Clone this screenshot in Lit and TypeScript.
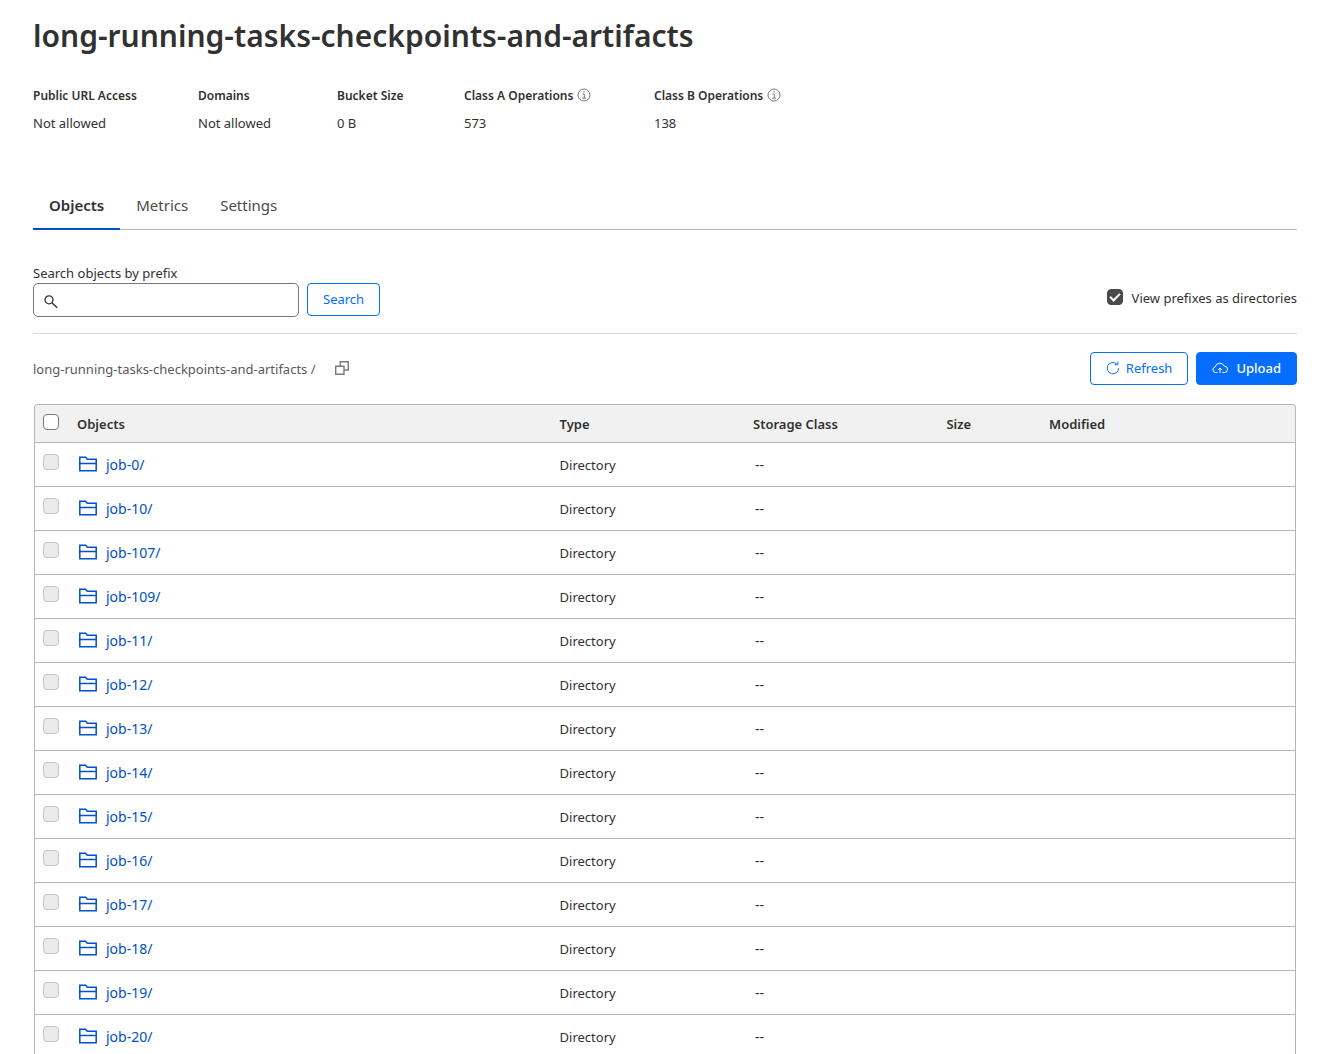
import { LitElement, html, css, svg } from "lit";
import { customElement, state } from "lit/decorators.js";

interface Stat {
  label: string;
  value: string;
  info?: boolean;
}

const BUCKET = "long-running-tasks-checkpoints-and-artifacts";

const STATS: Stat[] = [
  { label: "Public URL Access", value: "Not allowed" },
  { label: "Domains", value: "Not allowed" },
  { label: "Bucket Size", value: "0 B" },
  { label: "Class A Operations", value: "573", info: true },
  { label: "Class B Operations", value: "138", info: true },
];

const TABS = ["Objects", "Metrics", "Settings"];

const JOBS = [0, 10, 107, 109, 11, 12, 13, 14, 15, 16, 17, 18, 19, 20].map((n) => `job-${n}/`);

const icon = (name: string, width: number, height: number, body: unknown) => html`
  <svg class="icon ${name}" width=${width} height=${height} viewBox="0 0 ${width} ${height}"
    fill="none" stroke="currentColor" aria-hidden="true">${body}</svg>`;

const infoIcon = () => icon("info", 14, 14, svg`
  <circle cx="7" cy="7" r="6"></circle>
  <path d="M5.5 6H7.3V10M5.3 10.2H9M6.3 3.9H7.6"></path>`);

const searchIcon = () => icon("glass", 14, 14, svg`
  <circle cx="5" cy="4.8" r="4" stroke-width="1.3"></circle>
  <path d="M7.9 7.7L13.2 12.7" stroke-width="1.4"></path>`);

const copyIcon = () => icon("copy", 14, 14, svg`
  <path d="M0.7 5.2H9V13.3H0.7Z" stroke-width="1.4"></path>
  <path d="M5.2 5V0.7H13.3V9H9.2" stroke-width="1.4"></path>`);

const refreshIcon = () => icon("refresh", 14, 14, svg`
  <path d="M12.6 7.2A5.7 5.7 0 1 1 10.8 3"></path>
  <path d="M11.9 0.6V3.7H8.7"></path>`);

const uploadIcon = () => icon("cloud", 16, 14, svg`
  <path d="M5.4 11.5H3.4A2.8 2.8 0 0 1 3.1 6A4.8 4.8 0 0 1 12.2 5.1A3.2 3.2 0 0 1 12.6 11.5H10.4"></path>
  <path d="M8 12V7.2M5.9 9.1L8 7L10.1 9.1"></path>`);

const folderIcon = () => icon("folder", 18, 16, svg`
  <path d="M0.8 14.8V1.2H6.6L8.4 3.2H17.2V14.8Z" stroke-width="1.5"></path>
  <path d="M0.8 7.5H17.2" stroke-width="1.5"></path>`);

@customElement("app-root")
export class AppRoot extends LitElement {
  @state() private tab = "Objects";
  @state() private directories = true;

  static styles = css`
    :host {
      display: block;
      color: #313131;
      background: #fff;
      font: 13px/20px "Segoe UI", "Noto Sans", "Open Sans", sans-serif;
    }
    *, *::after { box-sizing: border-box; }
    .page { padding: 12px 22px 0 33px; }
    .icon { display: block; flex: none; }
    input, button { font: inherit; color: inherit; }

    h1 { margin: 0; font-size: 30px; line-height: 48px; font-weight: 600; }

    .stats {
      display: grid; grid-template-columns: 165px 139px 127px 190px auto;
      justify-content: start; margin: 24px 0 0;
    }
    .stat { display: flex; flex-direction: column; gap: 5px; }
    .stat dt {
      display: flex; align-items: center; gap: 4px;
      font-size: 12px; line-height: 24px; font-weight: 600;
    }
    .stat dd { margin: 0; }
    .stat .icon { color: #797979; margin-bottom: 2px; }

    .tabs { display: flex; margin-top: 47px; border-bottom: 1px solid #b6b6b6; }
    .tab {
      margin: 0 0 -1px; padding: 13px 16px 11px; border: 0; border-bottom: 2px solid transparent;
      background: none; font-size: 15px; line-height: 24px; color: #4a4a4a; cursor: pointer;
    }
    .tab.active { border-bottom-color: #0051c3; color: #313131; font-weight: 600; }

    .toolbar {
      display: flex; justify-content: space-between; align-items: flex-end;
      margin-top: 33px; padding-bottom: 16px; border-bottom: 1px solid #d9d9d9;
    }
    .search { display: flex; align-items: flex-end; gap: 8px; }
    .field { display: flex; flex-direction: column; }
    .box {
      display: flex; align-items: center; gap: 8px; width: 266px; height: 34px;
      padding: 4px 10px 0; border: 1px solid #797979; border-radius: 5px;
    }
    .box input { flex: 1; min-width: 0; border: 0; outline: 0; padding: 0; background: none; }
    .btn {
      display: flex; align-items: center; height: 33px; padding: 0 15px 2px; margin-bottom: 1px;
      border: 1px solid #056dff; border-radius: 4px; background: #fff; color: #056dff; cursor: pointer;
    }
    .btn.primary { background: #056dff; color: #fff; gap: 8px; font-weight: 500; }
    .btn.refresh { gap: 6px; }
    .toggle { display: flex; align-items: center; gap: 9px; margin-bottom: 9px; }
    .toggle .check { margin-bottom: 2px; }

    .check {
      appearance: none; display: grid; place-items: center; flex: none;
      width: 16px; height: 16px; margin: 0;
      border: 1px solid #797979; border-radius: 4px; background: #fff;
    }
    .check:disabled { border-color: #c3c3c3; background: #ebebeb; }
    .check:checked { border-color: #4a4a4a; background: #4a4a4a; }
    .check:checked::after {
      content: ""; width: 10px; height: 6px; margin-bottom: 3px;
      border: solid #fff; border-width: 0 0 2px 2px; transform: rotate(-45deg);
    }

    .pathbar { display: flex; justify-content: space-between; align-items: center; margin-top: 18px; }
    .crumbs { display: flex; align-items: center; gap: 19px; color: #595959; }
    .copy-btn { padding: 0 0 2px; border: 0; background: none; color: #797979; cursor: pointer; }
    .actions { display: flex; gap: 8px; }
    .actions .btn { margin: 0; }

    .frame { margin: 19px 1px 0; border: 1px solid #b6b6b6; border-bottom: 0; border-radius: 4px 4px 0 0; overflow: hidden; }
    table { width: 100%; table-layout: fixed; border-collapse: separate; border-spacing: 0; }
    th, td { padding: 0 8px; text-align: left; border-bottom: 1px solid #b6b6b6; }
    th { height: 38px; padding-top: 1px; background: #f1f1f1; font-weight: 600; }
    td { height: 44px; }
    .col-check { width: 34px; }
    .col-name { width: 38.3%; }
    .col-wide { width: 15.35%; }
    .col-size { width: 8.15%; }
    th .check { margin-bottom: 4px; }
    td .check { margin-bottom: 6px; }
    .dash { padding-left: 10px; font-size: 14px; }
    .name {
      display: flex; align-items: center; gap: 9px; padding-left: 2px;
      font-size: 14px; color: #0051c3; text-decoration: none;
    }
    .name .icon { margin-bottom: 2px; }
  `;

  render() {
    return html`
      <main class="page">
        <h1>${BUCKET}</h1>
        <dl class="stats">
          ${STATS.map((s) => html`
            <div class="stat">
              <dt>${s.label}${s.info ? infoIcon() : ""}</dt>
              <dd>${s.value}</dd>
            </div>`)}
        </dl>

        <nav class="tabs" role="tablist">
          ${TABS.map((t) => html`
            <button class="tab ${t === this.tab ? "active" : ""}" role="tab"
              aria-selected=${t === this.tab} @click=${() => (this.tab = t)}>${t}</button>`)}
        </nav>

        <section class="toolbar">
          <form class="search" @submit=${(e: Event) => e.preventDefault()}>
            <div class="field">
              <label for="prefix">Search objects by prefix</label>
              <div class="box">${searchIcon()}<input id="prefix" type="text" /></div>
            </div>
            <button class="btn" type="submit">Search</button>
          </form>
          <label class="toggle">
            <input class="check" type="checkbox" .checked=${this.directories}
              @change=${() => (this.directories = !this.directories)} />
            View prefixes as directories
          </label>
        </section>

        <section class="pathbar">
          <div class="crumbs">
            <span>${BUCKET} /</span>
            <button class="copy-btn" aria-label="Copy path">${copyIcon()}</button>
          </div>
          <div class="actions">
            <button class="btn refresh">${refreshIcon()}Refresh</button>
            <button class="btn primary">${uploadIcon()}Upload</button>
          </div>
        </section>

        <div class="frame">
          <table>
            <thead>
              <tr>
                <th class="col-check"><input class="check" type="checkbox" aria-label="Select all" /></th>
                <th class="col-name">Objects</th>
                <th class="col-wide">Type</th>
                <th class="col-wide">Storage Class</th>
                <th class="col-size">Size</th>
                <th>Modified</th>
              </tr>
            </thead>
            <tbody>
              ${JOBS.map((job) => html`
                <tr>
                  <td><input class="check" type="checkbox" disabled aria-label="Select ${job}" /></td>
                  <td><a class="name" href="#${job}">${folderIcon()}${job}</a></td>
                  <td>Directory</td>
                  <td class="dash">--</td>
                  <td></td>
                  <td></td>
                </tr>`)}
            </tbody>
          </table>
        </div>
      </main>`;
  }
}
